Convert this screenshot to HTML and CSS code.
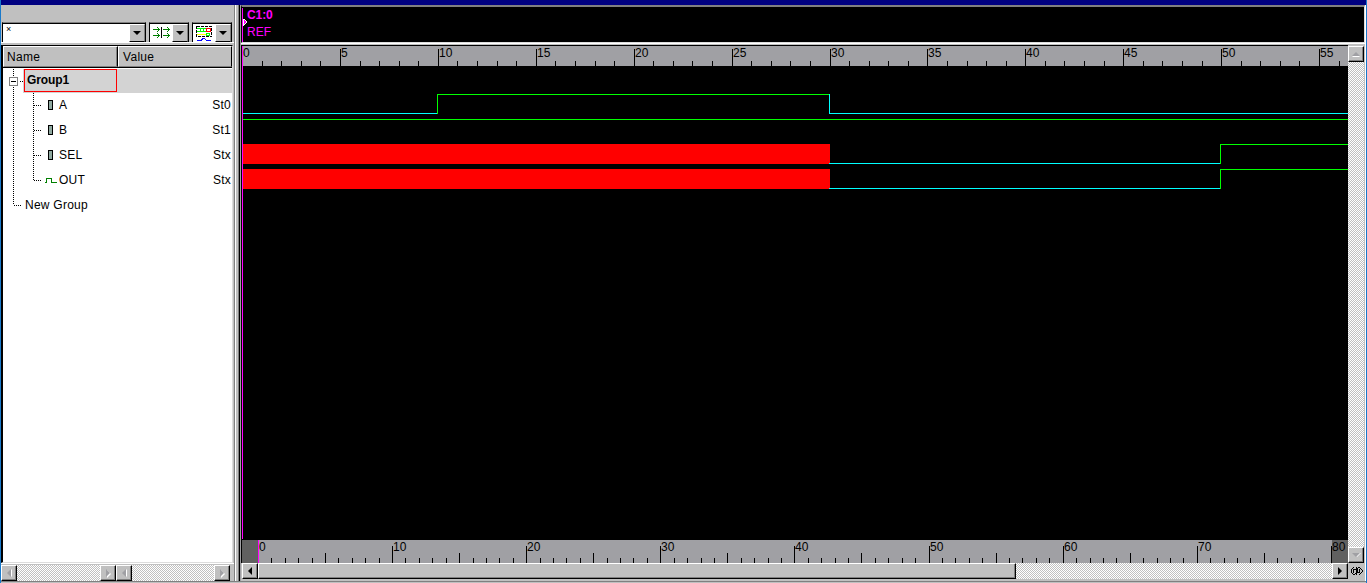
FILE: index.html
```html
<!DOCTYPE html>
<html lang="en">
<head>
<meta charset="utf-8">
<title>Waveform viewer</title>
<link rel="stylesheet" href="styles.css">
</head>
<body>
<div class="titlebar"></div>
<div class="main">
  <aside class="signals">
    <div class="toolbar">
      <div class="combo combo-filter"><span class="filter-text">×</span><button class="drop" aria-label="Filters"></button></div>
      <div class="combo combo-edge">
        <svg class="edge-icon" width="18" height="13" viewBox="0 0 18 13"><path class="g" d="M0 3.500h7M0 9.500h7M10 3.500h7M10 9.500h7M4 1.500h1M5 2.500h1M5 4.500h1M4 5.500h1M4 7.500h1M5 8.500h1M5 10.500h1M4 11.500h1M14 1.500h1M15 2.500h1M15 4.500h1M14 5.500h1M14 7.500h1M15 8.500h1M15 10.500h1M14 11.500h1"/><path class="k" d="M8.500 1v11"/></svg>
        <button class="drop" aria-label="Edges"></button>
      </div>
      <div class="combo combo-bus">
        <svg class="bus-icon" width="17" height="15" viewBox="0 0 17 15"><rect class="dash" x=".5" y=".5" width="15" height="10"/><path d="M1 2.500h10M1 5.500h10M4.500 2v4M7.500 2v4" stroke="#0f0"/><path d="M1 8.500h9" stroke="#ff0"/><rect x="10.500" y="2.500" width="4" height="3" stroke="red"/><rect x="10.500" y="7.500" width="3" height="2" stroke="#0f0"/><path d="M1 14.500h5M5 13.500h2M6 12.500h3M9 13.500h1M10 14.500h5" stroke="#00f"/></svg>
        <button class="drop" aria-label="Buses"></button>
      </div>
    </div>
    <div class="table">
      <div class="head"><span class="th th-name">Name</span><span class="th th-value">Value</span></div>
      <div class="tree">
        <svg class="branches" width="50" height="142" viewBox="0 0 50 142"><path class="dots" d="M10.500 1v8M10.500 19v118M11 137.500h8M17 13.500h3M30.500 25v87M31 37.500h8M31 62.500h8M31 87.500h8M31 112.500h8"/><rect x="6.500" y="9.500" width="8" height="8" fill="#fff" stroke="#808080"/><path d="M8 13.500h5" stroke="#000"/></svg>
        <div class="row group"><span class="group-name">Group1</span></div>
        <div class="row"><i class="net"></i><span>A</span><span class="val">St0</span></div>
        <div class="row"><i class="net"></i><span>B</span><span class="val">St1</span></div>
        <div class="row"><i class="net"></i><span>SEL</span><span class="val">Stx</span></div>
        <div class="row out"><svg class="wave-icon" width="12" height="7" viewBox="0 0 12 7"><path d="M0 4.500h1.500v-4h5v4h5"/></svg><span>OUT</span><span class="val">Stx</span></div>
        <div class="row new-group">New Group</div>
      </div>
    </div>
    <div class="scrolls">
      <div class="hscroll h-name"><b class="btn"><i class="tri left off"></i></b><b class="btn"><i class="tri right off"></i></b></div>
      <div class="hscroll h-value"><b class="btn"><i class="tri left off"></i></b><b class="btn"><i class="tri right off"></i></b></div>
    </div>
  </aside>
  <div class="splitter"></div>
  <section class="viewer">
    <div class="cursor-pane">
      <svg class="marker" width="5" height="35" viewBox="0 0 5 35"><path d="M.5 1v34" stroke="#f0f"/><path d="M1 12h1l2 2v2l-2 2H1z" fill="#f0f" stroke="#fff"/></svg>
      <div class="cursor-labels"><strong>C1:0</strong><span>REF</span></div>
    </div>
    <div class="wave-pane">
      <div class="wave-column">
        <svg id="ruler" class="ruler" width="1106" height="20" viewBox="242 46 1106 20"></svg>
        <svg class="waves" width="1106" height="474" viewBox="242 66 1106 474">
          <path class="lo" d="M243 113.500h194M829.500 94v19.500H1348M829 163.500h391M829 188.500h391"/>
          <path class="hi" d="M437.500 114V94.500H829M243 119.500h1105M1220.500 164v-19.500H1348M1220.500 189v-19.500H1348"/>
          <path class="x" d="M243 144h587v19H829v1H243zM243 169h587v19H829v1H243z"/>
          <path class="cursor" d="M242.500 66v473"/>
        </svg>
        <svg id="overview" class="overview" width="1106" height="23" viewBox="242 540 1106 23"></svg>
      </div>
      <div class="vscroll"><b class="btn"><i class="tri up off"></i></b><b class="btn"><i class="tri down off"></i></b></div>
    </div>
    <div class="bottom-scroll">
      <b class="btn"><i class="tri left"></i></b><span class="thumb"></span><span class="trough"></span><b class="btn"><i class="tri right"></i></b>
      <svg class="link" width="17" height="16" viewBox="0 0 17 16"><path d="M6 4L3 7v2l3 3 2-2V7L6 6 5 8l1 2M11 12l3-3V7l-3-3-2 2v3l2 1 1-2-1-2M8 12l1-8"/></svg>
    </div>
  </section>
</div>
<div class="footer"></div>
<script src="ruler.js"></script>
</body>
</html>
```
FILE: styles.css
```css
* { box-sizing: border-box; }
body { margin: 0; width: 1367px; height: 583px; overflow: hidden; display: flex; flex-direction: column; background: #c0c0c0; border-left: 1px solid #1979ca; border-right: 1px solid #1979ca; font: 12px "Liberation Sans", Arial, sans-serif; color: #000; }
svg { display: block; fill: none; shape-rendering: crispEdges; flex: none; }
.titlebar { height: 5px; background: #000080; flex: none; }
.main { height: 576px; display: flex; flex: none; }
.footer { height: 2px; border-top: 1px solid #808080; flex: none; }

.signals { width: 233px; display: flex; flex-direction: column; padding-top: 17px; }
.toolbar { height: 21px; display: flex; gap: 3px; padding-left: 1px; background: #c0c0c0; border-bottom: 1px solid #fff; }
.combo { height: 20px; display: flex; align-items: flex-start; background: #fff; border: 1px solid #000; border-top-color: #808080; border-bottom: 0; box-shadow: inset 0 1px #000; padding-top: 1px; }
.combo-filter { width: 144px; justify-content: space-between; }
.combo-edge { width: 40px; }
.combo-bus { width: 40px; }
.filter-text { font-size: 9px; line-height: 9px; padding: 1px 0 0 3px; }
.drop { appearance: none; width: 16px; height: 18px; margin: 0 0 0 auto; padding: 0; background: #c0c0c0; border: 1px solid; border-color: #fff #808080 #000 #fff; display: flex; align-items: center; justify-content: center; }
.drop::before { content: ""; border: 4px solid transparent; border-top-color: #000; border-bottom: 0; }
.edge-icon { margin: 2px 0 0 3px; }
.edge-icon .g { stroke: #008000; }
.edge-icon .k { stroke: #000; }
.bus-icon { margin: 2px 0 0 3px; }
.bus-icon .dash { stroke: #000; stroke-dasharray: 3 1; }

.table { height: 520px; margin-top: 2px; border-left: 2px solid #000; border-top: 1px solid #000; border-right: 1px solid #dcdcdc; border-bottom: 1px solid #dcdcdc; background: #fff; width: 232px; }
.head { height: 22px; display: flex; border-bottom: 1px solid #000; }
.th { background: #c0c0c0; border: 1px solid; border-color: #fff #808080 #808080 #fff; line-height: 20px; padding-left: 3px; letter-spacing: .3px; }
.th-name { width: 115px; border-right-color: #000; box-shadow: inset -1px 0 #808080; }
.th-value { flex: 1; border-right-color: #000; padding-left: 4px; }
.tree { position: relative; }
.branches { position: absolute; left: 0; top: 0; z-index: 1; }
.dots { stroke: #000; stroke-dasharray: 1 1; }
.row { height: 25px; display: flex; align-items: center; padding-left: 45px; line-height: 25px; letter-spacing: .25px; }
.row .val { margin-left: auto; padding-right: 1px; }
.group { height: 24px; padding: 0; margin: 0 0 0 20px; background: #d3d3d3; border-left: 1px solid #d3d3d3; align-items: flex-start; }
.tree { padding-top: 1px; }
.group-name { width: 93px; height: 23px; border: 1px solid red; font-weight: bold; line-height: 20px; padding-left: 2px; letter-spacing: -.1px; }
.net { width: 5px; height: 10px; margin: 0 6px 1px 0; border: 1px solid #000; background: #8fa9a0; }
.out { padding-left: 42px; }
.wave-icon { margin: 2px 2px 0 0; stroke: #008000; }
.new-group { padding-left: 22px; }

.scrolls { height: 18px; display: flex; padding-top: 1px; border-top: 1px solid #fff; }
.hscroll, .vscroll, .trough { background: conic-gradient(#c0c0c0 25%, #fff 0 50%, #c0c0c0 0 75%, #fff 0) 0 0 / 2px 2px; }
.hscroll { display: flex; justify-content: space-between; }
.h-name { width: 115px; }
.h-value { width: 114px; }
.btn { width: 16px; height: 16px; flex: none; display: flex; align-items: center; justify-content: center; background: #c0c0c0; border: 1px solid; border-color: #fff #000 #000 #fff; box-shadow: inset -1px -1px #808080; }
.tri { border: 4px solid transparent; }
.left { border-width: 4px 4px 4px 0; border-right-color: #000; }
.right { border-width: 4px 0 4px 4px; border-left-color: #000; }
.left.off { border-right-color: #a0a0a4; filter: drop-shadow(1px 0 #fff); }
.right.off { border-left-color: #a0a0a4; filter: drop-shadow(1px 1px #fff); }
.up.off { border-width: 0 4px 4px; border-bottom-color: #a0a0a4; filter: drop-shadow(0 1px #fff); }
.down.off { border-width: 4px 4px 0; border-top-color: #a0a0a4; filter: drop-shadow(1px 0 #fff); }

.splitter { width: 6px; background: linear-gradient(90deg, #808080 1px, #fff 1px 2px, #c0c0c0 2px 4px, #808080 4px 5px, #000 5px); }
.viewer { flex: 1; display: flex; flex-direction: column; background: #c0c0c0; border-left: 1px solid #a0a0a4; border-right: 1px solid #fff; }
.cursor-pane { height: 38px; display: flex; background: #000; border-top: 2px solid #808080; border-left: 1px solid #000; border-right: 1px solid #dcdcdc; border-bottom: 1px solid #dcdcdc; }
.cursor-labels { display: flex; flex-direction: column; color: #f0f; line-height: 17px; }
.cursor-labels strong { letter-spacing: -.1px; }
.wave-pane { height: 520px; display: flex; border-top: 1px solid #fff; }
.wave-column { width: 1107px; border-left: 1px solid #000; border-top: 1px solid #000; margin-top: 1px; }
.ruler, .overview { background: #a0a0a4; }
.waves { background: #000; }
.lo { stroke: #0ff; }
.hi { stroke: #0f0; }
.x { fill: red; }
.cursor { stroke: #f0f; }
.tick { stroke: #000; }
.ruler text, .overview text { fill: #000; font-size: 12px; letter-spacing: .2px; }
.shade { fill: #606060; }
.vscroll { width: 16px; display: flex; flex-direction: column; justify-content: space-between; margin-top: 2px; }
.bottom-scroll { height: 16px; display: flex; }
.thumb { width: 758px; background: #c0c0c0; border: 1px solid; border-color: #fff #000 #000 #fff; box-shadow: inset -1px -1px #808080; }
.trough { flex: 1; }
.bottom-scroll .btn:first-child { margin-left: 1px; }
.link { stroke: #000; background: #c0c0c0; }
```
FILE: ruler.js
```js
const NS = "http://www.w3.org/2000/svg";

function add(parent, name, attrs, text) {
  const el = document.createElementNS(NS, name);
  for (const key in attrs) el.setAttribute(key, attrs[key]);
  if (text !== undefined) el.textContent = text;
  parent.appendChild(el);
}

function tick(svg, x, top, bottom) {
  add(svg, "path", { class: "tick", d: `M${x + 0.5} ${top}V${bottom}` });
}

const ruler = document.getElementById("ruler");
for (let n = 0; n <= 56; n++) {
  const x = Math.floor(242.6 + 19.58 * n);
  const major = n % 5 === 0;
  tick(ruler, x, major ? 49 : 61, 66);
  if (major) add(ruler, "text", { x: x + 1, y: 57 }, n);
}
add(ruler, "path", { class: "cursor", d: "M242.5 46V66" });

const overview = document.getElementById("overview");
add(overview, "path", { class: "shade", d: "M242 540h16v23h-16zM1332 540h16v23h-16z" });
for (let n = 0; n <= 80; n++) {
  const x = Math.floor(258.4 + 13.413 * n);
  tick(overview, x, n % 10 === 0 ? 546 : n % 5 === 0 ? 553 : 558, 563);
  if (n % 10 === 0) add(overview, "text", { x: x + 1, y: 551 }, n);
}
add(overview, "path", { class: "cursor", d: "M258.5 540V563" });
```
